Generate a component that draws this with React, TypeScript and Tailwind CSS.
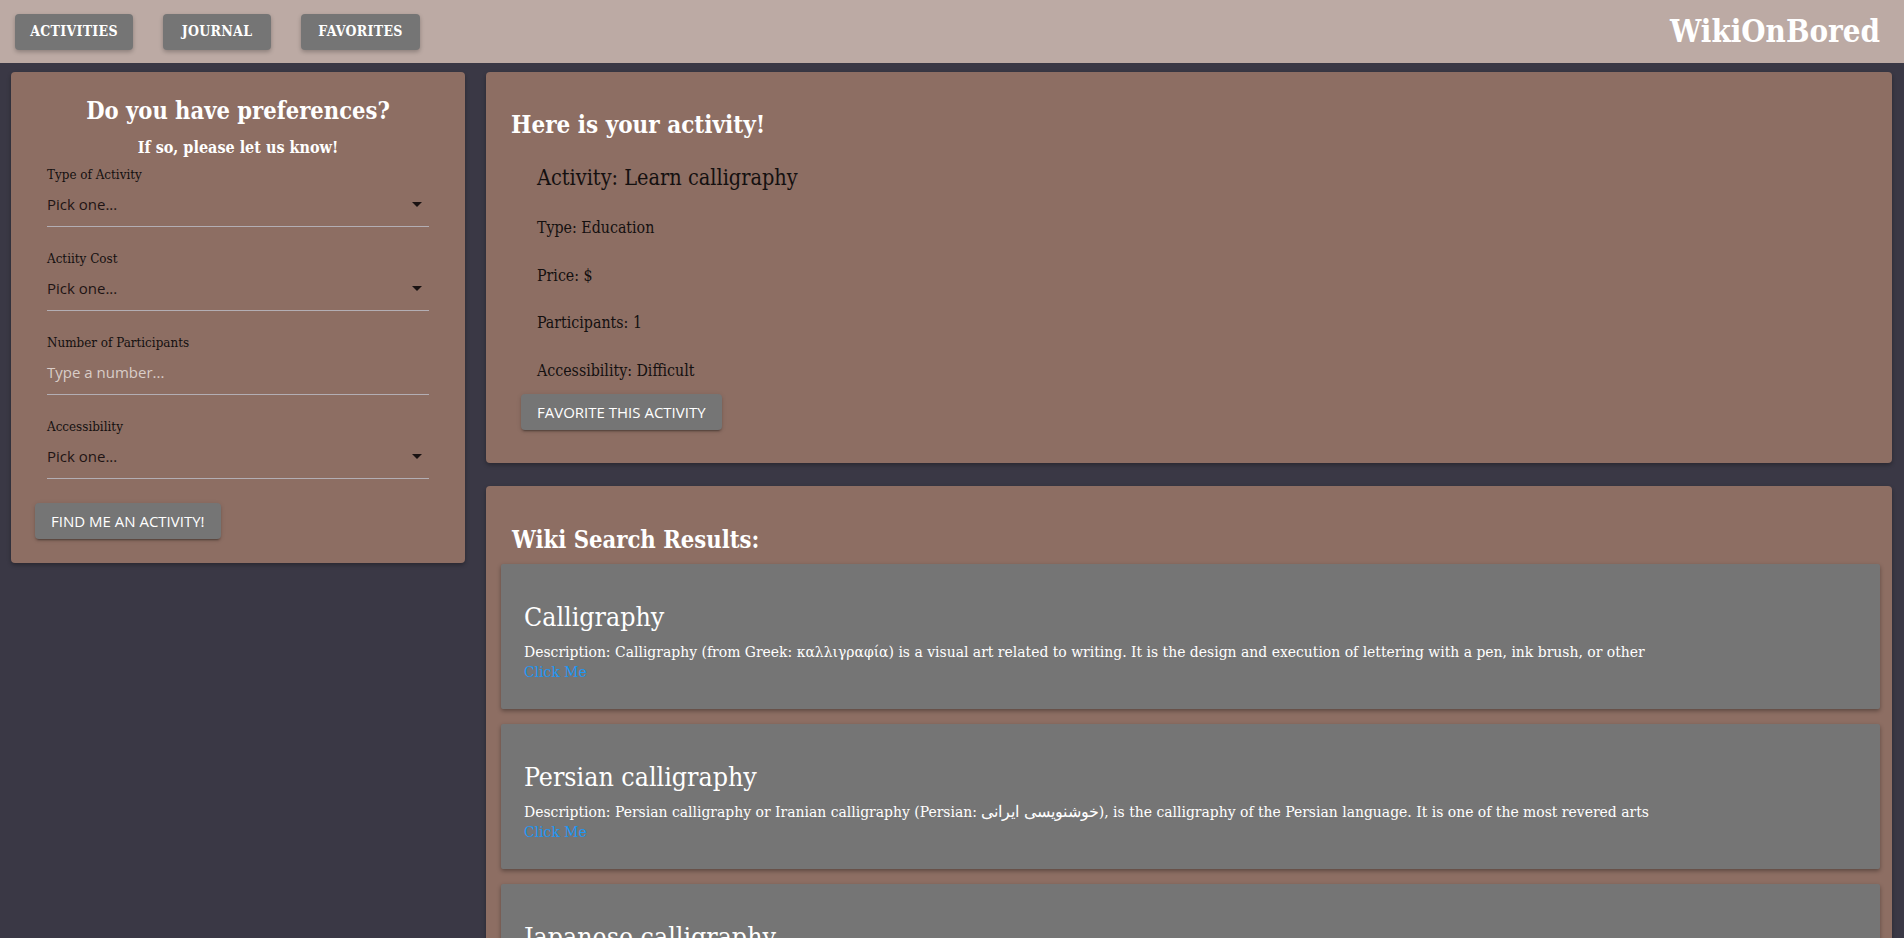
import React from 'react';

const navItems = [
  { label: 'Activities', w: 'w-[118px]' },
  { label: 'Journal', w: 'w-[108px]' },
  { label: 'Favorites', w: 'w-[119px]' },
];

const fields = [
  { label: 'Type of Activity', placeholder: 'Pick one...', select: true },
  { label: 'Actiity Cost', placeholder: 'Pick one...', select: true },
  { label: 'Number of Participants', placeholder: 'Type a number...', select: false },
  { label: 'Accessibility', placeholder: 'Pick one...', select: true },
];

const results = [
  {
    title: 'Calligraphy',
    desc: 'Description: Calligraphy (from Greek: καλλιγραφία) is a visual art related to writing. It is the design and execution of lettering with a pen, ink brush, or other',
  },
  {
    title: 'Persian calligraphy',
    desc: 'Description: Persian calligraphy or Iranian calligraphy (Persian: خوشنویسی ایرانی), is the calligraphy of the Persian language. It is one of the most revered arts',
  },
  {
    title: 'Japanese calligraphy',
    desc: 'Description: Japanese calligraphy (書道, shodō) also called shūji (習字) is a form of calligraphy, or artistic writing, of the Japanese language.',
  },
];

const ArrowDrop = () => (
  <svg viewBox="0 0 24 24" className="h-6 w-6 fill-[#1a1212]">
    <path d="M7 10l5 5 5-5z" />
  </svg>
);

const GreyButton: React.FC<{ children: React.ReactNode; className?: string }> = ({ children, className }) => (
  <button
    className={`h-9 rounded-[4px] bg-[#757575] px-4 font-['Open_Sans',sans-serif] text-[15px] uppercase text-white font-stretch-normal shadow-[0_3px_1px_-2px_rgba(0,0,0,0.2),0_2px_2px_0_rgba(0,0,0,0.14),0_1px_5px_0_rgba(0,0,0,0.12)] ${className ?? ''}`}
  >
    {children}
  </button>
);

export default function App() {
  return (
    <div className="min-h-screen bg-[#3a3845] font-['DejaVu_Serif',serif] font-stretch-semi-condensed">
      {/* top bar */}
      <header className="flex h-[63px] items-center justify-between bg-[#bcaaa4] pl-[15px] pr-6">
        <nav className="flex gap-[30px]">
          {navItems.map((item) => (
            <button
              key={item.label}
              className={`h-9 ${item.w} rounded-[4px] bg-[#757575] text-[14px] font-bold uppercase tracking-[0.3px] text-white shadow-[0_2px_4px_rgba(0,0,0,0.25)]`}
            >
              {item.label}
            </button>
          ))}
        </nav>
        <div className="text-[31px] font-bold text-white">WikiOnBored</div>
      </header>

      <main className="flex gap-[21px] pl-[11px] pr-3 pt-[9px]">
        {/* preferences */}
        <section className="w-[454px] shrink-0 self-start rounded-[4px] bg-[#8d6e63] pb-6 pt-[23px] shadow-[0_2px_4px_rgba(0,0,0,0.3)]">
          <h2 className="text-center text-[23.5px] leading-8 font-bold text-white">Do you have preferences?</h2>
          <h3 className="mt-[10px] text-center text-[16px] leading-[22px] font-bold text-white">If so, please let us know!</h3>
          <div className="px-9">
            {fields.map((f, i) => (
              <div key={f.label} className={i === 0 ? 'mt-2' : 'mt-6'}>
                <div className="text-[13.3px] leading-4 text-[#141010]">{f.label}</div>
                <div className="mt-1 flex h-10 items-center justify-between border-b border-[#b3aeb4] pb-[5px] font-['Open_Sans',sans-serif] text-[15px] font-stretch-normal">
                  <span className={f.select ? 'text-[#1f1414]' : 'text-[#d9cdc8]'}>{f.placeholder}</span>
                  {f.select && <ArrowDrop />}
                </div>
              </div>
            ))}
          </div>
          <GreyButton className="ml-6 mt-6">Find me an activity!</GreyButton>
        </section>

        {/* right column */}
        <div className="flex min-w-0 flex-1 flex-col gap-[23px]">
          <section className="rounded-[4px] bg-[#8d6e63] pb-[33px] pl-[25px] pt-[38px] shadow-[0_2px_4px_rgba(0,0,0,0.3)]">
            <h2 className="text-[24px] leading-[30px] font-bold text-white">Here is your activity!</h2>
            <div className="pl-[26px] text-[#141010]">
              <h3 className="mt-[25px] text-[21.5px] leading-[26px]">Activity: Learn calligraphy</h3>
              <p className="mt-[27px] text-[15.8px] leading-5">Type: Education</p>
              <p className="mt-[28px] text-[15.8px] leading-5">Price: $</p>
              <p className="mt-[27px] text-[15.8px] leading-5">Participants: 1</p>
              <p className="mt-[28px] text-[15.8px] leading-5">Accessibility: Difficult</p>
            </div>
            <GreyButton className="ml-[10px] mt-[13px]">Favorite this activity</GreyButton>
          </section>

          <section className="rounded-[4px] bg-[#8d6e63] pb-4 pl-[15px] pr-3 pt-[38px] shadow-[0_2px_4px_rgba(0,0,0,0.3)]">
            <h2 className="pl-[11px] text-[23.6px] leading-8 font-bold text-white">Wiki Search Results:</h2>
            <div className="mt-2 flex flex-col gap-[15px]">
              {results.map((r) => (
                <article
                  key={r.title}
                  className="rounded-[2px] bg-[#757575] pb-[27px] pl-[23px] pt-[37px] text-white shadow-[0_2px_4px_rgba(0,0,0,0.35)]"
                >
                  <h3 className="text-[26.5px] leading-8">{r.title}</h3>
                  <p className="mt-[9px] text-[15.5px] leading-5">{r.desc}</p>
                  <a className="block text-[15.5px] leading-5 text-[#2196f3]">Click Me</a>
                </article>
              ))}
            </div>
          </section>
        </div>
      </main>
    </div>
  );
}
